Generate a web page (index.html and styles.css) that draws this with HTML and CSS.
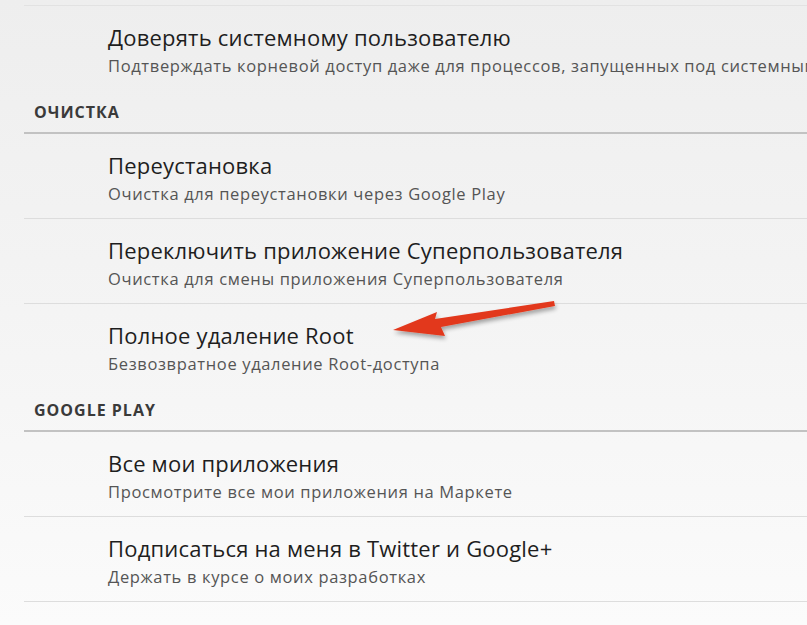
FILE: index.html
```html
<!DOCTYPE html>
<html lang="ru">
<head>
<meta charset="utf-8">
<title>Настройки</title>
<link rel="stylesheet" href="styles.css">
</head>
<body>
<div class="screen">
  <div class="list">
    <div class="item first last">
      <div class="title">Доверять системному пользователю</div>
      <div class="sub">Подтверждать корневой доступ даже для процессов, запущенных под системным пользователем</div>
    </div>
    <div class="header">ОЧИСТКА</div>
    <div class="item">
      <div class="title">Переустановка</div>
      <div class="sub">Очистка для переустановки через Google Play</div>
    </div>
    <div class="item">
      <div class="title">Переключить приложение Суперпользователя</div>
      <div class="sub">Очистка для смены приложения Суперпользователя</div>
    </div>
    <div class="item last">
      <div class="title">Полное удаление Root</div>
      <div class="sub">Безвозвратное удаление Root-доступа</div>
    </div>
    <div class="header">GOOGLE PLAY</div>
    <div class="item">
      <div class="title">Все мои приложения</div>
      <div class="sub">Просмотрите все мои приложения на Маркете</div>
    </div>
    <div class="item">
      <div class="title">Подписаться на меня в Twitter и Google+</div>
      <div class="sub">Держать в курсе о моих разработках</div>
    </div>
  </div>
  <svg class="arrow" width="200" height="60" viewBox="0 0 200 60">
    <defs>
      <filter id="sh" x="-20%" y="-50%" width="140%" height="200%">
        <feGaussianBlur in="SourceAlpha" stdDeviation="2"/>
        <feOffset dx="1" dy="3" result="b"/>
        <feComponentTransfer><feFuncA type="linear" slope="0.35"/></feComponentTransfer>
        <feMerge><feMergeNode/><feMergeNode in="SourceGraphic"/></feMerge>
      </filter>
    </defs>
    <path filter="url(#sh)" fill="#e2381c" d="M10 40 L54 22 L52 29 L171 11 L172 16 L58 37 L62 46 Z"/>
  </svg>
</div>
</body>
</html>
```

FILE: styles.css
```css
html, body {
  margin: 0;
  padding: 0;
}
body {
  width: 807px;
  height: 625px;
  overflow: hidden;
  background: linear-gradient(to bottom, #eeeeee 0%, #f4f4f4 50%, #fbfbfb 100%);
  font-family: "Open Sans", "Noto Sans", "DejaVu Sans", sans-serif;
}
.screen {
  position: relative;
  width: 807px;
  height: 625px;
  padding-top: 5px;
  box-sizing: border-box;
}
.list {
  margin-left: 24px;
  border-top: 1px solid #e2e2e2;
}
.item {
  border-bottom: 1px solid #dddddd;
  padding-left: 84px;
  padding-top: 17px;
  box-sizing: border-box;
  height: 85px;
  white-space: nowrap;
  overflow: hidden;
}
.item.last {
  border-bottom: none;
}
.title {
  font-size: 22px;
  line-height: 28px;
  letter-spacing: 0.2px;
  color: #1e1e1e;
}
.sub {
  font-size: 16.5px;
  line-height: 20px;
  letter-spacing: 0.65px;
  margin-top: 5px;
  color: #555555;
}
.header {
  height: 43px;
  box-sizing: border-box;
  border-bottom: 2px solid #c2c2c2;
  padding-left: 10px;
  padding-top: 11px;
  font-size: 16px;
  line-height: 20px;
  letter-spacing: 1px;
  font-weight: bold;
  color: #3a3a3a;
}
.arrow {
  position: absolute;
  left: 383px;
  top: 290px;
}
```
